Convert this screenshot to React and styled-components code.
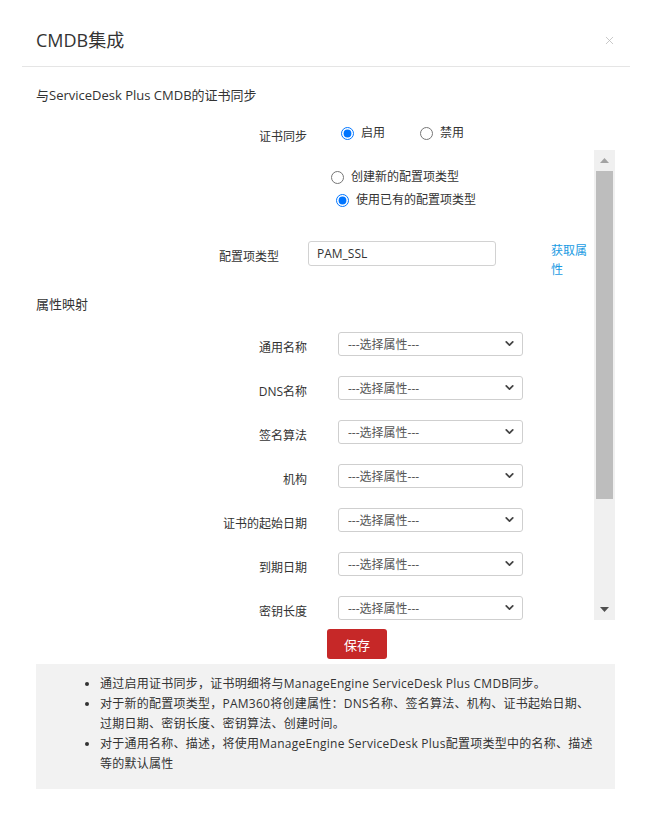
import React from 'react';
import styled, { createGlobalStyle } from 'styled-components';
import { ChevronDown, X } from 'lucide-react';

const mappings = [
    '通用名称',
    'DNS名称',
    '签名算法',
    '机构',
    '证书的起始日期',
    '到期日期',
    '密钥长度',
];

const thumbHeight = 328;

const App = () => {
    return (
        <>
            <GlobalStyle />
            <Dialog>
                <Header>
                    <Title>CMDB集成</Title>
                    <Close>
                        <X size={13} strokeWidth={1.4} />
                    </Close>
                </Header>

                <Body>
                    <SectionTitle>与ServiceDesk Plus CMDB的证书同步</SectionTitle>
                    <SyncRow>
                        <Label width={271}>证书同步</Label>
                        <RadioGroup>
                            <RadioOption>
                                <Radio type="radio" name="sync" defaultChecked />
                                启用
                            </RadioOption>
                            <RadioOption>
                                <Radio type="radio" name="sync" />
                                禁用
                            </RadioOption>
                        </RadioGroup>
                    </SyncRow>

                    <ScrollFrame>
                        <Viewport>
                            <TypeChoice>
                                <RadioOption>
                                    <Radio type="radio" name="type" />
                                    创建新的配置项类型
                                </RadioOption>
                                <RadioOption indent={5}>
                                    <Radio type="radio" name="type" defaultChecked />
                                    使用已有的配置项类型
                                </RadioOption>
                            </TypeChoice>

                            <FieldRow>
                                <Label width={243}>配置项类型</Label>
                                <TextInput defaultValue="PAM_SSL" />
                                <FetchLink>获取属性</FetchLink>
                            </FieldRow>

                            <SubTitle>属性映射</SubTitle>

                            <MappingList>
                                {mappings.map((name) => (
                                    <FieldRow key={name} gap={31}>
                                        <Label width={271}>{name}</Label>
                                        <SelectWrap>
                                            <Select defaultValue="">
                                                <option value="">---选择属性---</option>
                                            </Select>
                                            <Chevron>
                                                <ChevronDown size={13} strokeWidth={3.2} />
                                            </Chevron>
                                        </SelectWrap>
                                    </FieldRow>
                                ))}
                            </MappingList>
                        </Viewport>

                        <ScrollBar>
                            <ArrowButton>
                                <svg width="9" height="5" viewBox="0 0 9 5">
                                    <polygon points="0,5 4.5,0 9,5" fill="#a3a3a3" />
                                </svg>
                            </ArrowButton>
                            <Track>
                                <Thumb style={{ height: thumbHeight }} />
                            </Track>
                            <ArrowButton>
                                <svg width="9" height="5" viewBox="0 0 9 5">
                                    <polygon points="0,0 9,0 4.5,5" fill="#505050" />
                                </svg>
                            </ArrowButton>
                        </ScrollBar>
                    </ScrollFrame>

                    <Actions>
                        <SaveButton>保存</SaveButton>
                    </Actions>

                    <InfoBox>
                        <InfoList>
                            <li>通过启用证书同步，证书明细将与ManageEngine ServiceDesk Plus CMDB同步。</li>
                            <li>对于新的配置项类型，PAM360将创建属性：DNS名称、签名算法、机构、证书起始日期、过期日期、密钥长度、密钥算法、创建时间。</li>
                            <li>对于通用名称、描述，将使用ManageEngine ServiceDesk Plus配置项类型中的名称、描述等的默认属性</li>
                        </InfoList>
                    </InfoBox>
                </Body>
            </Dialog>
        </>
    );
};

const GlobalStyle = createGlobalStyle`
    body {
        margin: 0;
        background: #fff;
        color: #333;
        font-family: "Open Sans", "Noto Sans CJK SC", sans-serif;
        font-size: 12px;
    }
    * { box-sizing: border-box; }
`;

const Dialog = styled.div`
    width: 650px;
    height: 820px;
    padding: 0 20px 0 22px;
`;

const Header = styled.div`
    height: 67px;
    display: flex;
    align-items: flex-start;
    justify-content: space-between;
    padding: 28px 0 0 14px;
    border-bottom: 1px solid #e5e5e5;
`;

const Title = styled.h2`
    margin: 0;
    font-size: 18px;
    font-weight: 400;
    line-height: 24px;
    color: #333;
`;

const Close = styled.span`
    color: #b8b8b8;
    margin: 6px 14px 0 0;
    display: flex;
`;

const Body = styled.div`
    padding: 0 15px 0 14px;
`;

const SectionTitle = styled.div`
    margin-top: 18px;
    font-size: 13px;
    line-height: 20px;
`;

const SyncRow = styled.div`
    display: flex;
    align-items: center;
    gap: 34px;
    height: 28px;
    margin-top: 14px;
    margin-bottom: 3px;
`;

const Label = styled.label`
    width: ${(p) => p.width}px;
    flex: none;
    text-align: right;
    padding-top: 8px;
    line-height: 16px;
`;

const RadioGroup = styled.div`
    display: flex;
    gap: 35px;
`;

const RadioOption = styled.label`
    display: flex;
    align-items: center;
    gap: 7px;
    line-height: 18px;
    margin-left: ${(p) => p.indent || 0}px;
`;

const Radio = styled.input`
    width: 13px;
    height: 13px;
    margin: 0;
`;

const ScrollFrame = styled.div`
    display: flex;
    height: 470px;
`;

const Viewport = styled.div`
    flex: 1;
    overflow: hidden;
`;

const ScrollBar = styled.div`
    width: 21px;
    flex: none;
    display: flex;
    flex-direction: column;
    background: #f0f0f0;
`;

const ArrowButton = styled.div`
    height: 21px;
    flex: none;
    display: flex;
    align-items: center;
    justify-content: center;

    svg {
        display: block;
    }
`;

const Track = styled.div`
    flex: 1;
`;

const Thumb = styled.div`
    margin: 0 2px;
    background: #bdbdbd;
`;

const TypeChoice = styled.div`
    display: flex;
    flex-direction: column;
    gap: 5px;
    padding: 18px 0 0 295px;
`;

const FieldRow = styled.div`
    display: flex;
    align-items: flex-start;
    gap: ${(p) => p.gap || 29}px;
    margin-top: ${(p) => (p.gap ? 0 : 32)}px;
`;

const TextInput = styled.input`
    width: 188px;
    height: 25px;
    border: 1px solid #d2d2d2;
    border-radius: 3px;
    padding: 0 8px;
    font: inherit;
    color: #333;
    outline: none;
`;

const FetchLink = styled.a`
    width: 38px;
    margin-left: 26px;
    color: #1a9be3;
    line-height: 19px;
    cursor: pointer;
`;

const SubTitle = styled.div`
    margin-top: 15px;
    font-size: 13px;
    line-height: 20px;
`;

const MappingList = styled.div`
    display: flex;
    flex-direction: column;
    gap: 20px;
    padding: 18px 0 11px;
`;

const SelectWrap = styled.div`
    position: relative;
    width: 185px;
    height: 24px;
`;

const Select = styled.select`
    appearance: none;
    width: 100%;
    height: 100%;
    border: 1px solid #cfcfcf;
    border-radius: 3px;
    background: #fff;
    padding: 0 24px 0 9px;
    font: inherit;
    color: #555;
    outline: none;
`;

const Chevron = styled.span`
    position: absolute;
    right: 7px;
    top: 5px;
    color: #444;
    pointer-events: none;
    display: flex;
`;

const Actions = styled.div`
    padding: 9px 0 5px 291px;
`;

const SaveButton = styled.button`
    width: 60px;
    height: 30px;
    border: 0;
    border-radius: 3px;
    background: #c62828;
    color: #fff;
    font: inherit;
    font-size: 13px;
    cursor: pointer;
`;

const InfoBox = styled.div`
    background: #f2f2f2;
    padding: 10px 20px 15px 0;
`;

const InfoList = styled.ul`
    margin: 0;
    padding-left: 64px;
    line-height: 20px;
    letter-spacing: 0.25px;
`;

export default App;
